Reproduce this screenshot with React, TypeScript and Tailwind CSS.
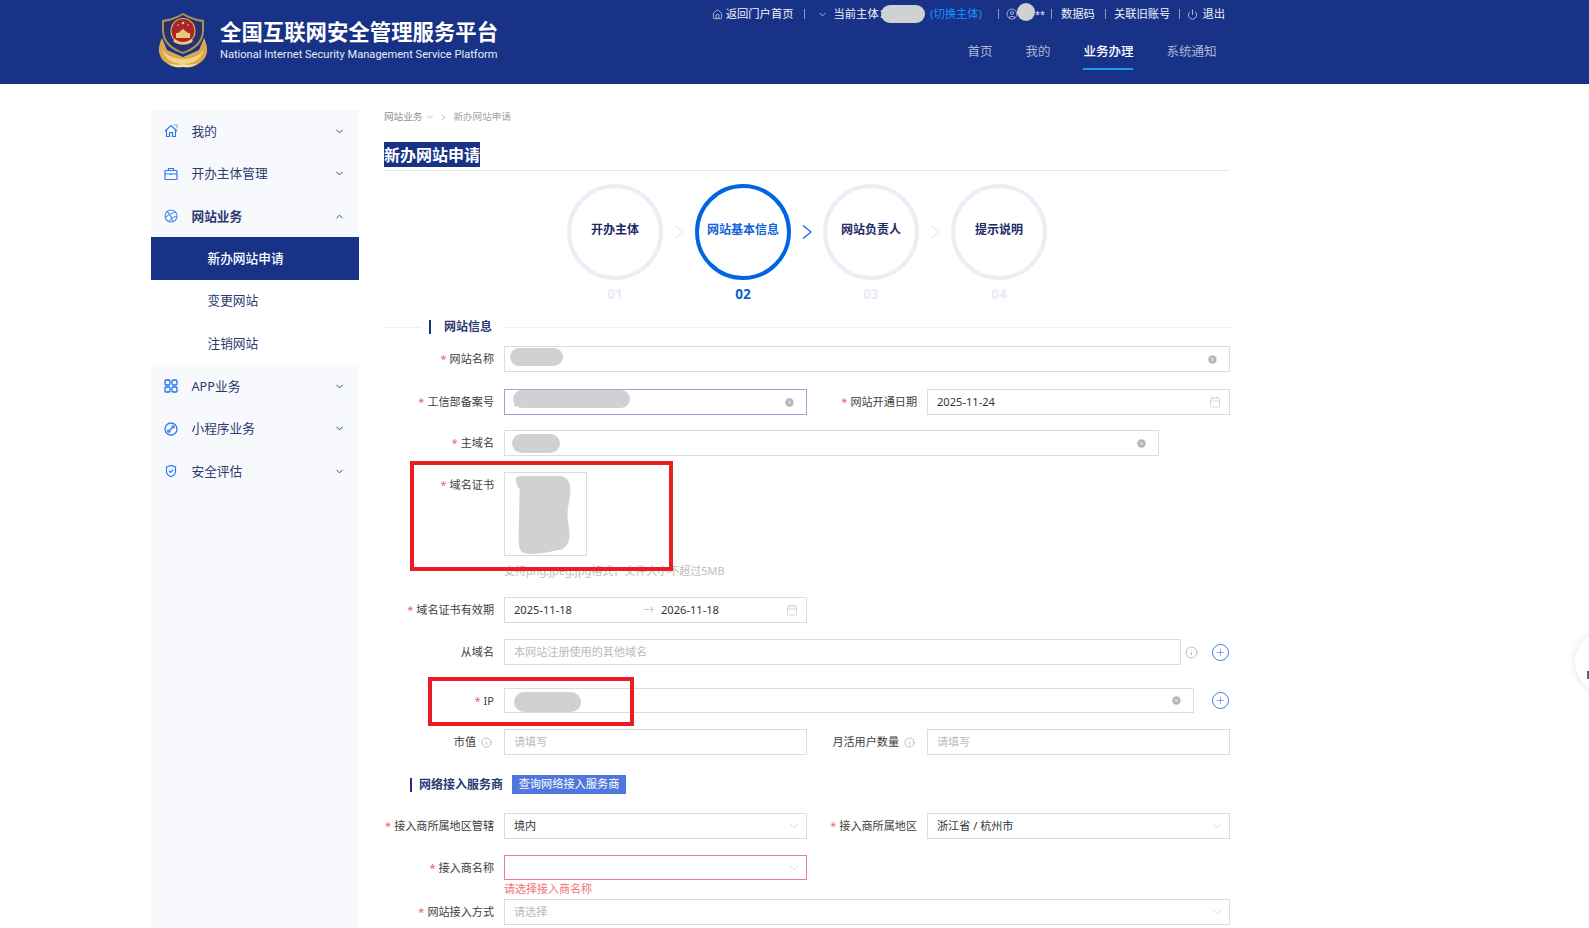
import type { ReactNode } from "react";
import { ChevronDown, ChevronUp, ChevronRight, Calendar, CircleX, Info, Plus, House, Power, CircleUser } from "lucide-react";

const FONT = '"Noto Sans", "Noto Sans CJK SC", sans-serif';

function Emblem() {
  return (
    <svg viewBox="0 0 56 60" className="h-[60px] w-[56px] shrink-0">
      {/* wreath */}
      <path d="M7 28 C2 38 3 47 10 52 C16 57 23 59 28 56 C33 59 40 57 46 52 C53 47 54 38 49 28 L44 40 L28 47 L12 40 Z" fill="#d9a94e" />
      <path d="M7 40 C10 49 18 54 28 54 C38 54 46 49 49 40 C44 46 36 49 28 49 C20 49 12 46 7 40 Z" fill="#f2d384" />
      <path d="M13 53 C18 57 24 58 28 57 C32 58 38 57 43 53 C38 55 32 55 28 54 C24 55 18 55 13 53 Z" fill="#f6e2a6" />
      {/* shield */}
      <path d="M7 20 L7 10 C15 9 23 6 28 3 C33 6 41 9 49 10 L49 20 C49 33 40 40 28 44 C16 40 7 33 7 20 Z" fill="#a88f58" />
      <path d="M9 20 L9 12 C16 11 23 8 28 5 C33 8 40 11 47 12 L47 20 C47 32 38 38 28 42 C18 38 9 32 9 20 Z" fill="#28306e" />
      {/* national emblem */}
      <ellipse cx="28" cy="21" rx="12" ry="12.5" fill="#a8262a" stroke="#d8b25c" strokeWidth="1.2" />
      <rect x="21" y="23" width="14" height="5" fill="#e8c878" />
      <path d="M23 23 L28 19 L33 23 Z" fill="#e8c878" />
      <circle cx="28" cy="13" r="1.3" fill="#f0d060" />
      <circle cx="23" cy="15" r="0.8" fill="#f0d060" />
      <circle cx="33" cy="15" r="0.8" fill="#f0d060" />
      <path d="M18 31 C22 36 34 36 38 31 L36 29 C32 33 24 33 20 29 Z" fill="#e8c878" />
    </svg>
  );
}

function Sep() {
  return <span className="block h-[10px] w-px bg-[#8c99c3]" />;
}

function Header() {
  return (
    <header className="flex h-[84px] shrink-0 justify-between bg-[#183287] pl-[155px] pr-[364px] text-white">
      <div className="flex items-center pb-[5px]">
        <Emblem />
        <div className="ml-[9px] flex flex-col">
          <div className="text-[21.4px] font-bold leading-[30px]">全国互联网安全管理服务平台</div>
          <div className="text-[11.1px] leading-[16px] text-[#e6edf8]" style={{ fontFamily: 'Roboto, sans-serif' }}>National Internet Security Management Service Platform</div>
        </div>
      </div>
      <div className="flex flex-col items-end">
        <div className="flex h-[28px] items-center text-[11.3px] text-[#f1f3f9]">
          <House size={11} strokeWidth={1.4} className="mr-[3px]" />
          <span>返回门户首页</span>
          <span className="mx-[10px]"><Sep /></span>
          <ChevronDown size={11} strokeWidth={1.4} className="ml-[2px] mr-[6px]" />
          <span className="whitespace-nowrap">当前主体：</span>
          <span className="-ml-[9px] h-[18px] w-[44px] rounded-full bg-[#d0d1d3]" />
          <span className="ml-[5px] text-[#1f8fff]">(切换主体)</span>
          <span className="ml-[16px] mr-[7px]"><Sep /></span>
          <CircleUser size={12} strokeWidth={1.2} />
          <span className="mb-[4px] ml-[-1px] h-[18px] w-[18px] rounded-full bg-[#d0d1d3]" />
          <span className="w-[7px] text-[9px] leading-none">**</span>
          <span className="ml-[9px] mr-[9px]"><Sep /></span>
          <span>数据码</span>
          <span className="ml-[10px] mr-[8px]"><Sep /></span>
          <span>关联旧账号</span>
          <span className="ml-[9px] mr-[7px]"><Sep /></span>
          <Power size={11} strokeWidth={1.4} className="mr-[4px]" />
          <span>退出</span>
        </div>
        <nav className="mr-[8.5px] mt-[10px] flex gap-[33px] text-[12.5px] text-[#aeb8d6]">
          <span className="h-[32px] leading-[28px]">首页</span>
          <span className="h-[32px] leading-[28px]">我的</span>
          <span className="h-[32px] border-b-2 border-[#1e9bf0] font-medium leading-[28px] text-white">业务办理</span>
          <span className="h-[32px] leading-[28px]">系统通知</span>
        </nav>
      </div>
    </header>
  );
}

function HomeIcon() {
  return (
    <svg viewBox="0 0 14 14" className="h-[14px] w-[14px]" fill="none" stroke="#2f7bee" strokeWidth="1.2">
      <path d="M1 7 L7 1.5 L13 7 M2.5 6 V12.5 H5.5 V8.5 H8.5 V12.5 H11.5 V6" />
      <path d="M9.5 1 H13 V4.5" stroke="#7fb0f5" />
    </svg>
  );
}

function CaseIcon() {
  return (
    <svg viewBox="0 0 14 14" className="h-[14px] w-[14px]" fill="none" stroke="#2f7bee" strokeWidth="1.2">
      <rect x="1" y="3.5" width="12" height="9" rx="0.8" />
      <path d="M4.5 3.5 V1.5 H9.5 V3.5 M1 7 H13" />
      <path d="M7 6.5 V8" />
    </svg>
  );
}

function BallIcon() {
  return (
    <svg viewBox="0 0 14 14" className="h-[14px] w-[14px]" fill="none" stroke="#4b8ef0" strokeWidth="1.1">
      <circle cx="7" cy="7" r="6" />
      <path d="M3 2.5 C6 5 8 9 8.5 12.8 M1.2 8.5 C4 6 8 4 11.5 3 M5 12.5 C7 9.5 10 7.5 13 7.5" />
    </svg>
  );
}

function GridIcon() {
  return (
    <svg viewBox="0 0 14 14" className="h-[14px] w-[14px]" fill="none" stroke="#1f70ec" strokeWidth="1.3">
      <rect x="1" y="1" width="5" height="5" rx="1" />
      <rect x="8" y="1" width="5" height="5" rx="1.5" />
      <rect x="1" y="8" width="5" height="5" rx="1" />
      <rect x="8" y="8" width="5" height="5" rx="1" />
    </svg>
  );
}

function LinkIcon() {
  return (
    <svg viewBox="0 0 14 14" className="h-[14px] w-[14px]" fill="none" stroke="#2f7bee" strokeWidth="1.3">
      <circle cx="7" cy="7" r="6" />
      <path d="M5 9 L9 5 M4.5 7.5 L3.8 8.5 C3.6 9.8 4.4 10.4 5.5 10 L6.5 9.3 M7.5 4.8 L8.5 4 C9.8 3.6 10.4 4.4 10 5.5 L9.3 6.5" />
    </svg>
  );
}

function ShieldIcon() {
  return (
    <svg viewBox="0 0 14 14" className="h-[14px] w-[14px]" fill="none" stroke="#2f7bee" strokeWidth="1.2">
      <path d="M2.5 3 L7 1.5 L11.5 3 V7.5 C11.5 10 9.5 11.7 7 12.7 C4.5 11.7 2.5 10 2.5 7.5 Z" />
      <path d="M5 6.8 L6.6 8.3 L9.2 5.6" />
    </svg>
  );
}

function MenuRow({ icon, label, open, bold }: { icon: ReactNode; label: string; open?: boolean; bold?: boolean }) {
  return (
    <div className="flex h-[42.5px] items-center pl-[13px] pr-[14px]">
      <span className="flex w-[14px] justify-center">{icon}</span>
      <span className={`ml-[13.5px] flex-1 text-[12.7px] text-[#2c3a70] ${bold ? "font-bold" : ""}`}>{label}</span>
      {open ? <ChevronUp size={11} color="#1f3585" /> : <ChevronDown size={11} color="#1f3585" />}
    </div>
  );
}

function Sidebar() {
  return (
    <aside className="mt-[26px] flex h-[900px] w-[208px] shrink-0 flex-col bg-[#f8f9fd]">
      <MenuRow icon={<HomeIcon />} label="我的" />
      <MenuRow icon={<CaseIcon />} label="开办主体管理" />
      <MenuRow icon={<BallIcon />} label="网站业务" open bold />
      <div className="-mt-[0.5px] flex flex-col bg-white text-[12.7px] text-[#2c3a70]">
        <div className="flex h-[43px] items-center bg-[#183287] pl-[56.5px] font-medium text-white">新办网站申请</div>
        <div className="flex h-[42px] items-center pl-[56.5px]">变更网站</div>
        <div className="flex h-[43px] items-center pl-[56.5px]">注销网站</div>
      </div>
      <MenuRow icon={<GridIcon />} label="APP业务" />
      <MenuRow icon={<LinkIcon />} label="小程序业务" />
      <MenuRow icon={<ShieldIcon />} label="安全评估" />
    </aside>
  );
}

function Step({ label, num, active }: { label: string; num: string; active?: boolean }) {
  return (
    <div className="flex w-[96px] flex-col items-center">
      <div className={`flex h-[96px] w-[96px] items-center justify-center rounded-full border-4 pb-[4px] text-[12px] font-bold ${active ? "border-[#0066e0] text-[#0f62d8]" : "border-[#ecedf5] text-[#1c2b66]"}`}>
        {label}
      </div>
      <div className={`mt-[4px] text-[13.5px] font-bold leading-[20px] ${active ? "text-[#0b5fd0]" : "text-[#e8ebf4]"}`}>{num}</div>
    </div>
  );
}

function Arrow({ active }: { active?: boolean }) {
  return (
    <div className="flex h-[96px] w-[32px] items-center justify-center">
      <svg viewBox="0 0 10 14" className="h-[14px] w-[10px]" fill="none" stroke={active ? "#0b66e0" : "#e6e8f0"} strokeWidth="1.2">
        <path d="M1 0.5 L9 7 L1 13.5" />
      </svg>
    </div>
  );
}

function Label({ text, required, children, top }: { text: string; required?: boolean; children?: ReactNode; top?: boolean }) {
  return (
    <div className={`flex w-[110px] shrink-0 items-center justify-end whitespace-nowrap text-[11.1px] leading-[26px] text-[#3d3d3d] ${top ? "h-[26px]" : ""}`}>
      {required && <span className="mr-[3px] text-[#f5606c]">*</span>}
      {text}
      {children}
    </div>
  );
}

function Box({ children, border }: { children?: ReactNode; border?: string }) {
  return (
    <div className={`flex min-w-0 flex-1 items-center justify-between border pl-[9px] pr-[8px] text-[11.1px] text-[#333] ${border ?? "border-[#dcdcdc]"}`}>
      {children}
    </div>
  );
}

function Clear() {
  return <CircleX size={11} fill="#b4b4b4" color="#ffffff" strokeWidth={1.6} className="mr-[3px]" />;
}

function DateIcon() {
  return <Calendar size={12} strokeWidth={1} color="#b5b5b5" />;
}

function SelectIcon() {
  return <ChevronDown size={14} strokeWidth={1} color="#bdbdbd" className="-mr-[3px]" />;
}

function AddButton() {
  return (
    <span className="flex h-[17px] w-[17px] shrink-0 items-center justify-center rounded-full border-[1.5px] border-[#3f74e8]">
      <Plus size={11} strokeWidth={1.3} color="#3f74e8" />
    </span>
  );
}

function Placeholder({ text }: { text: string }) {
  return <span className="text-[#bbbbbb]">{text}</span>;
}

function Form() {
  return (
    <div className="flex flex-col">
      <div className="mt-[16px] flex h-[14px] items-center">
        <span className="h-px w-[37px] bg-[#eeeff3]" />
        <span className="ml-[8px] h-[14px] w-[2px] bg-[#183287]" />
        <span className="ml-[13px] text-[12px] font-bold text-[#2c3a70]">网站信息</span>
        <span className="ml-[12px] h-px flex-1 bg-[#eeeff3]" />
      </div>

      <div className="mt-[12px] flex h-[26px] gap-[10px]">
        <Label text="网站名称" required />
        <Box><span /><Clear /></Box>
      </div>

      <div className="mt-[17px] flex h-[26px]">
        <div className="flex w-[423px] gap-[10px]">
          <Label text="工信部备案号" required />
          <Box border="border-[#98a6d0]"><span className="text-[#555]">.</span><Clear /></Box>
        </div>
        <div className="flex w-[423px] gap-[10px]">
          <Label text="网站开通日期" required />
          <Box>2025-11-24<DateIcon /></Box>
        </div>
      </div>

      <div className="mt-[15px] flex h-[26px] w-[775px] gap-[10px]">
        <Label text="主域名" required />
        <Box><span /><Clear /></Box>
      </div>

      <div className="mt-[16px] flex gap-[10px]">
        <Label text="域名证书" required top />
        <div className="h-[84px] w-[83px] border border-[#dcdcdc]">
          <svg viewBox="0 0 83 84" className="h-full w-full">
            <path d="M12 11 C10 6 11 3 16 3 L56 3 C63 3 67 9 67 16 C67 26 64 34 64 43 C64 52 67 58 66 66 C65 74 60 79 54 79 C44 82 35 83 27 83 C20 83 16 81 16 79 C13 74 14 68 14 63 L15 18 C15 15 12 14 12 11 Z" fill="#d0d1d3" />
          </svg>
        </div>
      </div>
      <div className="ml-[120px] mt-[7px] text-[11px] leading-[15px] text-[#bdbdbd]">支持png,jpeg,jpg格式，文件大小不超过5MB</div>

      <div className="mt-[19px] flex h-[26px] w-[423px] gap-[10px]">
        <Label text="域名证书有效期" required />
        <Box>
          <span className="w-[129px]">2025-11-18</span>
          <span className="w-[18px] text-[#c4c4c4]">→</span>
          <span className="flex-1">2026-11-18</span>
          <DateIcon />
        </Box>
      </div>

      <div className="mt-[16px] flex h-[26px] items-center">
        <div className="flex h-full w-[796.5px] gap-[10px]">
          <Label text="从域名" />
          <Box><Placeholder text="本网站注册使用的其他域名" /></Box>
        </div>
        <Info size={13} strokeWidth={1} color="#8c8c8c" className="ml-[4px]" />
        <span className="ml-[14px]"><AddButton /></span>
      </div>

      <div className="mt-[23px] flex h-[25px] items-center">
        <div className="flex h-full w-[809.5px] gap-[10px]">
          <Label text="IP" required />
          <Box><span className="text-[#555]">.</span><Clear /></Box>
        </div>
        <span className="ml-[18.5px]"><AddButton /></span>
      </div>

      <div className="mt-[16px] flex h-[26px]">
        <div className="flex w-[423px] gap-[10px]">
          <Label text="市值"><Info size={11} strokeWidth={1} color="#777" className="ml-[5px] mr-[2px]" /></Label>
          <Box><Placeholder text="请填写" /></Box>
        </div>
        <div className="flex w-[423px] gap-[10px]">
          <Label text="月活用户数量"><Info size={11} strokeWidth={1} color="#777" className="ml-[5px] mr-[2px]" /></Label>
          <Box><Placeholder text="请填写" /></Box>
        </div>
      </div>

      <div className="mt-[20px] flex h-[19px] items-center pl-[26px]">
        <span className="h-[14px] w-[2px] bg-[#183287]" />
        <span className="ml-[7px] text-[12px] font-bold text-[#2c3a70]">网络接入服务商</span>
        <span className="ml-[9px] flex h-[19px] w-[114px] items-center justify-center bg-[#4f77dc] text-[11.2px] text-white">查询网络接入服务商</span>
      </div>

      <div className="mt-[19px] flex h-[26px]">
        <div className="flex w-[423px] gap-[10px]">
          <Label text="接入商所属地区管辖" required />
          <Box>境内<SelectIcon /></Box>
        </div>
        <div className="flex w-[423px] gap-[10px]">
          <Label text="接入商所属地区" required />
          <Box>浙江省 / 杭州市<SelectIcon /></Box>
        </div>
      </div>

      <div className="mt-[16px] flex h-[25px] w-[423px] gap-[10px]">
        <Label text="接入商名称" required />
        <Box border="border-[#e8808a]"><span /><SelectIcon /></Box>
      </div>
      <div className="ml-[120px] h-[19px] text-[11px] leading-[18px] text-[#f0707a]">请选择接入商名称</div>

      <div className="flex h-[26px] gap-[10px]">
        <Label text="网站接入方式" required />
        <Box><Placeholder text="请选择" /><SelectIcon /></Box>
      </div>
    </div>
  );
}

function Main() {
  return (
    <main className="ml-[25px] w-[846px] shrink-0">
      <div className="mt-[26px] flex h-[14px] items-center text-[9.6px] text-[#8f8f8f]">
        <span>网站业务</span>
        <ChevronDown size={10} strokeWidth={1} className="ml-[3px] text-[#666]" />
        <ChevronRight size={9} strokeWidth={1.2} className="ml-[4px] text-[#4a5a90]" />
        <span className="ml-[5px] text-[#a5a5a5]">新办网站申请</span>
      </div>
      <div className="mt-[18px] border-b border-[#e5e7ee] pb-[3px]">
        <span className="block h-[25px] w-[96px] bg-[#183287] text-[16px] font-bold leading-[26px] text-white">新办网站申请</span>
      </div>
      <div className="ml-[183px] mt-[13px] flex">
        <Step label="开办主体" num="01" />
        <Arrow />
        <Step label="网站基本信息" num="02" active />
        <Arrow active />
        <Step label="网站负责人" num="03" />
        <Arrow />
        <Step label="提示说明" num="04" />
      </div>
      <Form />
    </main>
  );
}

export default function App() {
  return (
    <div className="relative flex h-[928px] flex-col overflow-hidden bg-white" style={{ fontFamily: FONT }}>
      <Header />
      <div className="flex pl-[151px]">
        <Sidebar />
        <Main />
      </div>

      {/* redaction blobs and the red marks drawn on the screenshot */}
      <span className="absolute left-[510px] top-[348px] h-[18px] w-[53px] rounded-full bg-[#d0d1d3]" />
      <span className="absolute left-[513px] top-[390px] h-[18px] w-[117px] rounded-full bg-[#d0d1d3]" />
      <span className="absolute left-[512px] top-[434px] h-[19px] w-[48px] rounded-full bg-[#d0d1d3]" />
      <span className="absolute left-[514px] top-[692px] h-[20px] w-[67px] rounded-full bg-[#d0d1d3]" />
      <div className="absolute left-[410px] top-[461px] h-[110px] w-[263px] border-4 border-[#ec1c24]" />
      <div className="absolute left-[428px] top-[677px] h-[49px] w-[206px] border-4 border-[#ec1c24]" />
      <div className="absolute left-[1575px] top-[631px] h-[62px] w-[62px] rounded-full bg-white shadow-[0_0_10px_rgba(0,0,0,0.12)]" />
      <span className="absolute left-[1587px] top-[671px] h-[8px] w-[2px] bg-[#666]" />
    </div>
  );
}
